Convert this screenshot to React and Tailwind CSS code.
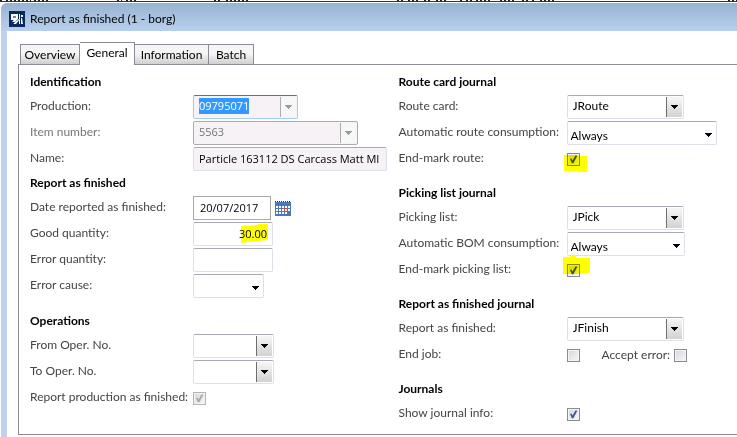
import { useEffect, useRef } from "react";

const scraps = [
  [0, 4], [6, 10], [18, 6], [26, 5], [34, 14], [117, 5], [126, 10], [214, 8], [226, 10], [238, 10],
  [397, 8], [408, 12], [424, 8], [436, 12], [460, 4], [466, 6], [476, 16], [500, 14], [522, 6], [532, 4], [540, 14], [728, 9],
];

function Group({ title, children }) {
  return (
    <section>
      <h2 className="h-[25px] text-xs leading-6 font-bold text-black">{title}</h2>
      <div className="flex flex-col gap-0.5">{children}</div>
    </section>
  );
}

function Row({ id, label, wide, dim, children }) {
  return (
    <div className="flex h-6 items-center">
      <label
        htmlFor={id}
        className={`shrink-0 pb-0.5 text-xs leading-4 whitespace-nowrap ${wide ? "w-[168px]" : "w-[163px]"} ${dim ? "text-[#777]" : "text-[#444]"}`}
      >
        {label}
      </label>
      {children}
    </div>
  );
}

function Arrow({ className }) {
  return (
    <svg className={className} width="7" height="4" viewBox="0 0 7 4" fill="currentColor" shapeRendering="crispEdges" aria-hidden="true">
      <path d="M0 0h7v1H6v1H5v1H4v1H3V3H2V2H1V1H0z" />
    </svg>
  );
}

const frame = "rounded-xs border border-[#dfdfe9] border-t-[#a9a9b3] bg-white";
const valueText = "font-['Open_Sans','Noto_Sans',sans-serif] text-[11px]";

function Combo({ id, value = "", width, look = "normal", selected }) {
  const ref = useRef(null);
  useEffect(() => {
    if (selected) {
      ref.current.focus({ preventScroll: true });
      ref.current.select();
    }
  }, [selected]);
  const looks = {
    normal: frame,
    active: "rounded-xs border border-[#a5cfe9] border-t-[#3c7fb1] bg-[#f6f2f6]",
    disabled: "rounded-xs border border-[#ababb0] bg-[#f6f2f6]",
  };
  const off = look !== "normal";
  return (
    <div className={`flex h-6 items-stretch p-px ${looks[look]} ${width}`}>
      <input
        ref={ref}
        id={id}
        defaultValue={value}
        disabled={look === "disabled"}
        className={`mb-0.5 h-4 min-w-0 flex-1 self-center bg-transparent pl-1 leading-4 outline-none selection:bg-[#3399ff] selection:text-white ${off ? valueText : "text-xs"} ${look === "disabled" ? "text-[#777]" : "text-black"}`}
      />
      <button
        type="button"
        aria-label="Open list"
        className={`flex w-4 items-center justify-center border-l ${off ? "border-[#ababb0] bg-[#f7f7f7] text-[#9a9a9a]" : "border-[#6e6e6e] bg-linear-to-b from-[#f6f6f6] to-[#d2d2d2] text-black"}`}
      >
        <Arrow />
      </button>
    </div>
  );
}

function Drop({ id, options, width }) {
  return (
    <div className={`relative h-6 ${frame} ${width}`}>
      <select id={id} className="h-full w-full appearance-none bg-transparent pb-0.5 pl-[3px] text-xs text-black outline-none">
        {options.map((o) => (
          <option key={o}>{o}</option>
        ))}
      </select>
      <Arrow className="pointer-events-none absolute top-[11px] right-1" />
    </div>
  );
}

function Check({ id, checked, disabled, mark }) {
  return (
    <span className="relative block size-[13px]">
      <input
        id={id}
        type="checkbox"
        defaultChecked={checked}
        disabled={disabled}
        className={`peer block size-[13px] appearance-none border bg-linear-to-br from-[#d3d6dc] to-[#f8f8f8] shadow-[inset_0_0_0_1px_#f4f4f4] ${disabled ? "border-[#b4b4b4]" : "border-[#8a8b8c]"}`}
      />
      <svg className={`pointer-events-none absolute inset-0 hidden peer-checked:block ${disabled ? "text-[#a9a9ad]" : "text-[#3f569c]"}`} width="13" height="13" viewBox="0 0 13 13" aria-hidden="true">
        <path d="M3 6l1.500-.6 1.100 2L8.400 2.400h2L6.400 10.200H4.900z" fill="currentColor" />
      </svg>
      {mark && (
        <svg className="pointer-events-none absolute -top-2 -left-1 mix-blend-multiply" width="28" height="28" viewBox="0 0 28 28" aria-hidden="true">
          <path d={mark} fill="#ff0" />
        </svg>
      )}
    </span>
  );
}

function Tab({ active, width, children }) {
  return (
    <button
      type="button"
      role="tab"
      aria-selected={!!active}
      className={`border border-b-0 border-l-0 border-[#8b8c95] text-xs text-black ${width} ${
        active ? "-mb-px h-[23px] bg-white pb-0.5" : "h-5 bg-linear-to-b from-[#f6f4f6] from-45% to-[#cfcfcf] first:border-l"
      }`}
    >
      {children}
    </button>
  );
}

export default function App() {
  return (
    <div className="flex min-h-screen flex-col overflow-hidden bg-white font-['Lato','Open_Sans',sans-serif]">
      <svg className="h-[3px] w-full shrink-0" height="3" shapeRendering="crispEdges" aria-hidden="true">
        {scraps.map(([x, w]) => (
          <path key={x} d={`M${x} .5h${w}`} stroke="#222" strokeDasharray="2 2" />
        ))}
        <rect y="1" width="100%" height="1" fill="#333" />
      </svg>
      <main className="ml-px flex flex-1 flex-col rounded-tl-md bg-[#bcd2ef]">
        <header className="flex h-7 items-center gap-[5px] rounded-tl-md bg-linear-to-b from-[#98b4d2] to-[#b8d0ee] pt-1 pl-2">
          <svg width="16" height="16" viewBox="0 0 16 16" aria-hidden="true">
            <path d="M0 0h16v16H0z" fill="#0a2a5c" />
            <path d="M2 3h7v5L6 11H3l2-2H2zM10 3h1v5l-4 5H4l6-5zM12 4h2v2h-2zM12 7h1l1 6h-2zM10 9h1v4h-1z" fill="#fff" />
            <path d="M4 5h3v2H4z" fill="#6f86ab" />
          </svg>
          <h1 className="text-xs text-black">Report as finished (1 - borg)</h1>
        </header>
        <div className="ml-1.5 flex-1 bg-white pt-[11px] pb-0.5 pl-[11px]">
          <div role="tablist" className="flex h-[22px] items-end pl-0.5">
            <Tab width="w-[60px]">Overview</Tab>
            <Tab width="w-[55px]" active>General</Tab>
            <Tab width="w-[74px]">Information</Tab>
            <Tab width="w-[45px]">Batch</Tab>
          </div>
          <div className="grid grid-cols-2 border border-r-0 border-[#8b8c95] pt-[5px] pb-2 pl-[11px]">
            <div className="flex flex-col">
              <Group title="Identification">
                <Row id="production" label="Production:">
                  <Combo id="production" value="09795071" width="w-[105px]" look="active" selected />
                </Row>
                <Row id="item" label="Item number:" dim>
                  <Combo id="item" value="5563" width="w-[165px]" look="disabled" />
                </Row>
                <Row id="name" label="Name:">
                  <input id="name" readOnly defaultValue="Particle 163112 DS Carcass Matt MI" className={`h-6 w-[194px] shrink-0 rounded-xs border border-[#dfdfe9] border-t-[#a9a9b3] bg-[#f6f2f6] pb-0.5 pl-[5px] text-black outline-none ${valueText}`} />
                </Row>
              </Group>
              <Group title="Report as finished">
                <Row id="date" label="Date reported as finished:">
                  <input id="date" defaultValue="20/07/2017" className={`h-6 w-[78px] border border-[#a9a9a9] bg-white pb-0.5 pl-1.5 text-black outline-none ${valueText}`} />
                  <button type="button" aria-label="Pick a date" className="ml-1">
                    <svg className="block" width="16" height="16" viewBox="0 0 16 16" shapeRendering="crispEdges" aria-hidden="true">
                      <path d="M0 2h16v14H0z" fill="#4a78bd" />
                      <path d="M1 6h2v2H1zM4 6h2v2H4zM7 6h2v2H7zM10 6h2v2h-2zM13 6h2v2h-2zM1 9h2v2H1zM4 9h2v2H4zM7 9h2v2H7zM13 9h2v2h-2zM1 12h2v2H1zM4 12h2v2H4zM7 12h2v2H7zM10 12h2v2h-2z" fill="#fff" />
                      <path d="M9.5 8.5h3v3h-3z" fill="#fff" stroke="#e0472b" />
                      <path d="M0 1.5h16" stroke="#333" strokeDasharray="1 1" />
                    </svg>
                  </button>
                </Row>
                <Row id="good" label="Good quantity:">
                  <div className="relative">
                    <input id="good" defaultValue="30.00" className={`block h-6 w-20 pr-[5px] pb-0.5 text-right text-black outline-none ${valueText} ${frame}`} />
                    <svg className="pointer-events-none absolute top-0.5 right-1 mix-blend-multiply" width="29" height="20" viewBox="0 0 29 20" aria-hidden="true">
                      <path d="M1 2l16-1 1-1h10v16l-10 1-10 1-7 1z" fill="#ff0" />
                    </svg>
                  </div>
                </Row>
                <Row id="error" label="Error quantity:">
                  <input id="error" className={`h-6 w-20 outline-none ${frame}`} />
                </Row>
                <Row id="cause" label="Error cause:">
                  <Drop id="cause" options={[""]} width="w-[71px]" />
                </Row>
              </Group>
              <div className="mt-[11px]">
                <Group title="Operations">
                  <Row id="from" label="From Oper. No.">
                    <Combo id="from" width="w-[81px]" />
                  </Row>
                  <Row id="to" label="To Oper. No.">
                    <Combo id="to" width="w-[81px]" />
                  </Row>
                  <Row id="rpf" label="Report production as finished:">
                    <Check id="rpf" checked disabled />
                  </Row>
                </Group>
              </div>
            </div>
            <div className="flex flex-col gap-2.5 pl-[15px]">
              <Group title="Route card journal">
                <Row wide id="route" label="Route card:">
                  <Combo id="route" value="JRoute" width="w-[117px]" />
                </Row>
                <Row wide id="autoroute" label="Automatic route consumption:">
                  <Drop id="autoroute" options={["Always"]} width="w-[150px]" />
                </Row>
                <Row wide id="endroute" label="End-mark route:">
                  <Check id="endroute" checked mark="M1 10l12 0 0 1 11 0v16h-10v-1H1z" />
                </Row>
              </Group>
              <Group title="Picking list journal">
                <Row wide id="pick" label="Picking list:">
                  <Combo id="pick" value="JPick" width="w-[117px]" />
                </Row>
                <Row wide id="autobom" label="Automatic BOM consumption:">
                  <Drop id="autobom" options={["Always"]} width="w-[118px]" />
                </Row>
                <Row wide id="endpick" label="End-mark picking list:">
                  <Check id="endpick" checked mark="M0 1l7 0 0-1h6v2l14 0v15l-14 1H0z" />
                </Row>
              </Group>
              <Group title="Report as finished journal">
                <Row wide id="finish" label="Report as finished:">
                  <Combo id="finish" value="JFinish" width="w-[117px]" />
                </Row>
                <Row wide id="endjob" label="End job:">
                  <Check id="endjob" />
                  <label htmlFor="accept" className="mr-1 ml-[22px] text-xs whitespace-nowrap text-[#444]">Accept error:</label>
                  <Check id="accept" />
                </Row>
              </Group>
              <Group title="Journals">
                <Row wide id="info" label="Show journal info:">
                  <Check id="info" checked />
                </Row>
              </Group>
            </div>
          </div>
        </div>
      </main>
    </div>
  );
}
